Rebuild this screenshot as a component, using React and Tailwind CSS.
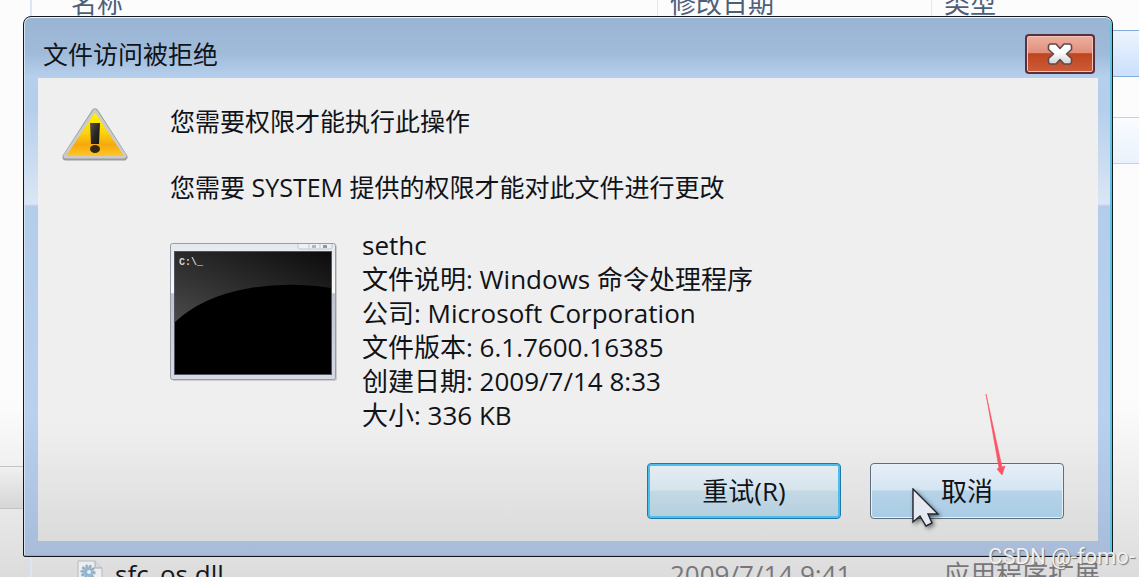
import clsx from 'clsx';

const details = [
  'sethc',
  '文件说明: Windows 命令处理程序',
  '公司: Microsoft Corporation',
  '文件版本: 6.1.7600.16385',
  '创建日期: 2009/7/14 8:33',
  '大小: 336 KB',
];

function FileList() {
  return (
    <div className="absolute inset-0 flex overflow-hidden bg-linear-to-b from-[#fcfcfd] from-70% to-[#dcdcdc]">
      <aside className="flex w-8 shrink-0 flex-col justify-end border-r-2 border-[#d9e6f3]">
        <div className="mb-[68px] h-[43px] border-y border-[#c4c4c4] bg-linear-to-b from-[#f0f0f0] to-[#d6d6d6]" />
      </aside>
      <div className="min-w-0 flex-1">
        <table className="-mt-6 w-full table-fixed border-separate border-spacing-0 text-left text-[26px] text-[#4c607a]">
          <colgroup>
            <col />
            <col className="w-[274px]" />
            <col className="w-[208px]" />
          </colgroup>
          <thead>
            <tr className="h-[54px]">
              <th className="pl-[39px] font-normal">名称</th>
              <th className="border-l border-[#dfe8f3] pl-3 font-normal">修改日期</th>
              <th className="border-l border-[#dfe8f3] pl-3 font-normal">类型</th>
            </tr>
          </thead>
          <tbody>
            <tr className="h-[47px]">
              <td colSpan={3} className="border-y border-[#84acdd] bg-linear-to-b from-[#edf4fe] to-[#c9e0fc]" />
            </tr>
            <tr className="h-10">
              <td colSpan={3} />
            </tr>
            <tr className="h-[47px]">
              <td colSpan={3} className="border-y border-[#b9d4ee] bg-linear-to-b from-[#fafcff] to-[#e9f2fc]" />
            </tr>
            <tr className="h-[386px]">
              <td colSpan={3} />
            </tr>
            <tr className="h-12 text-[#77777b]">
              <td className="pl-[45px]">
                <div className="flex items-center gap-3 text-[#16181c]">
                  <DllIcon />
                  sfc_os.dll
                </div>
              </td>
              <td className="pl-[13px]">2009/7/14 9:41</td>
              <td className="pl-[13px]">应用程序扩展</td>
            </tr>
          </tbody>
        </table>
      </div>
    </div>
  );
}

function DllIcon() {
  return (
    <svg width="26" height="28" viewBox="0 0 26 28" aria-hidden="true">
      <path d="M1 1H18L25 8V27H1Z" fill="#eceef0" stroke="#b5b9be" />
      <path d="M18 1V8H25" fill="#d6d9dd" stroke="#a9adb3" />
      <circle cx="11" cy="12" r="6" fill="#a9c3d8" stroke="#93a9bb" strokeWidth="3" strokeDasharray="2 1.6" />
      <circle cx="11" cy="12" r="4" fill="#8fb4d0" />
      <circle cx="12" cy="12" r="2" fill="#e6eff6" />
    </svg>
  );
}

function WarningIcon() {
  return (
    <svg width="68" height="56" viewBox="0 0 68 56" className="shrink-0" aria-hidden="true">
      <defs>
        <linearGradient id="warnFill" x1="0" y1="0" x2="0" y2="1">
          <stop offset="0" stopColor="#fff200" />
          <stop offset="0.45" stopColor="#fcd40c" />
          <stop offset="0.75" stopColor="#f6a80c" />
          <stop offset="1" stopColor="#fdc524" />
        </linearGradient>
        <linearGradient id="warnMark" x1="0" y1="0" x2="1" y2="1">
          <stop offset="0" stopColor="#5b5648" />
          <stop offset="0.5" stopColor="#2b2925" />
          <stop offset="1" stopColor="#15140f" />
        </linearGradient>
      </defs>
      <path d="M33 5L62 50H4Z" fill="#9b9b9b" stroke="#9b9b9b" strokeWidth="7" strokeLinejoin="round" />
      <path d="M33 5L62 49H4Z" fill="#cbcbcb" stroke="#cbcbcb" strokeWidth="5" strokeLinejoin="round" />
      <path d="M33 7L60 48H6Z" fill="url(#warnFill)" stroke="url(#warnFill)" strokeWidth="2" strokeLinejoin="round" />
      <path d="M28 16H38L37 37H29Z" fill="url(#warnMark)" />
      <ellipse cx="33" cy="42" rx="5" ry="4" fill="#33280f" />
    </svg>
  );
}

function ConsoleIcon() {
  return (
    <svg width="168" height="140" viewBox="0 0 168 140" className="shrink-0" aria-hidden="true">
      <defs>
        <linearGradient id="shine" x1="0" y1="1" x2="1" y2="0">
          <stop offset="0" stopColor="#4a4a4a" />
          <stop offset="0.5" stopColor="#2a2a2a" />
          <stop offset="1" stopColor="#0c0c0c" />
        </linearGradient>
        <linearGradient id="frame" x1="0" y1="0" x2="0" y2="1">
          <stop offset="0" stopColor="#e4e8ee" />
          <stop offset="0.36" stopColor="#fafbfc" />
          <stop offset="0.37" stopColor="#bfc5cf" />
          <stop offset="1" stopColor="#d5dae4" />
        </linearGradient>
      </defs>
      <rect x="2" y="2" width="165" height="136" rx="2" fill="#cccccc" />
      <rect x="0.5" y="0.5" width="165" height="136" rx="2" fill="url(#frame)" stroke="#989da5" />
      <path d="M128 1V4Q128 6 130 6H160Q162 6 162 4V1" fill="#eef0f3" stroke="#c3c7ce" />
      <path d="M139 1V6M150 1V6" stroke="#c3c7ce" />
      <rect x="142" y="2" width="4" height="3" fill="#b3b8c0" />
      <rect x="153" y="2" width="4" height="3" fill="#9097a1" />
      <rect x="4.5" y="8.5" width="157" height="123" fill="#000" stroke="#50545c" />
      <path d="M5 9H161V45Q115 38 75 46Q32 54 5 79Z" fill="url(#shine)" />
      <text x="9" y="22" fill="#d6d6d6" className="font-['Liberation_Mono',monospace] text-[10px] font-bold">
        C:\_
      </text>
    </svg>
  );
}

function CloseIcon() {
  return (
    <svg width="26" height="22" viewBox="0 0 26 22" aria-hidden="true">
      <defs>
        <linearGradient id="cross" x1="0" y1="0" x2="0" y2="1">
          <stop offset="0.4" stopColor="#ffffff" />
          <stop offset="1" stopColor="#d2d2d2" />
        </linearGradient>
      </defs>
      <path
        d="M3 1H9L13 5.5L17 1H23L24.500 2.500V6.500L19.500 11L24.500 15.500V19.500L23 21H17L13 16.500L9 21H3L1.500 19.500V15.500L6.500 11L1.500 6.500V2.500Z"
        fill="url(#cross)"
        stroke="#5d4a50"
        strokeWidth="1.6"
        strokeLinejoin="round"
      />
    </svg>
  );
}

function DialogButton({ primary, children }) {
  return (
    <button
      type="button"
      className={clsx(
        'relative flex h-14 w-[194px] items-center justify-center rounded-sm border text-[26px]',
        primary
          ? 'border-[#2476a6] bg-[linear-gradient(#e6edf3,#d6e4ec_48%,#c4d9e5_50%,#b4cede)] shadow-[inset_0_0_0_2px_#48bfec]'
          : 'border-[#5d6f7e] bg-[linear-gradient(#e8eef8,#d4e5f2_48%,#b6d3e7_50%,#a9cce5)] shadow-[inset_0_0_0_1px_#e6f1f8]'
      )}
    >
      {children}
    </button>
  );
}

function Pointer() {
  return (
    <svg width="32" height="44" viewBox="0 0 32 44" className="absolute top-6 left-[41px] drop-shadow-[2px_2px_2px_#00000080]" aria-hidden="true">
      <path d="M1 1V34L8 28L14 38L20 35L16 26H26Z" fill="#e6e9ef" stroke="#20242c" strokeWidth="1.4" />
    </svg>
  );
}

function RedArrow() {
  return (
    <svg width="22" height="84" viewBox="0 0 22 84" className="absolute right-[58px] bottom-[43px]" aria-hidden="true">
      <path d="M2 2L18 75L21 74L18 83L13 77L15 76Z" fill="#fb5362" stroke="#fb5362" strokeWidth="0.6" />
    </svg>
  );
}

function AccessDialog() {
  return (
    <div
      role="dialog"
      aria-labelledby="dialog-title"
      className="relative mr-[26px] ml-[23px] rounded-t-lg rounded-b-xs border border-[#15181d] bg-[linear-gradient(#9ab5d3,#a0bbda_36px,#b5cfec_60px,#b5ceea_90px,#dae6f5_187px,#b4cdea_189px,#b9d1ed_400px,#a8bcd9)] px-[14px] pb-[15px] shadow-[inset_0_1px_0_#eef5fb,inset_-2px_-1px_0_#5cc3e3,inset_1px_0_0_#d5e3f1]"
    >
      <div className="flex h-[61px] items-center justify-between pt-3 pr-[3px] pl-[5px]">
        <h1 id="dialog-title">文件访问被拒绝</h1>
        <button
          type="button"
          aria-label="关闭"
          className="flex h-10 w-[70px] items-center justify-center rounded-sm border-2 border-[#5c2f3d] bg-[linear-gradient(#eeb0a0,#e18f7b_47%,#c0451f_49%,#cd5c38)] shadow-[inset_0_0_0_1px_#f1c4b7]"
        >
          <CloseIcon />
        </button>
      </div>
      <div className="bg-linear-to-b from-[#efefef] from-75% to-[#dbdbdb] pt-[26px] pr-[34px] pb-[22px] pl-6">
        <div className="flex gap-10">
          <div className="pt-[3px]">
            <WarningIcon />
          </div>
          <div className="min-w-0 flex-1">
            <p>您需要权限才能执行此操作</p>
            <p className="mt-8">您需要 SYSTEM 提供的权限才能对此文件进行更改</p>
            <div className="mt-6 flex gap-6">
              <div className="pt-[15px]">
                <ConsoleIcon />
              </div>
              <ul className="text-[26px]">
                {details.map((line) => (
                  <li key={line}>{line}</li>
                ))}
              </ul>
            </div>
          </div>
        </div>
        <div className="relative mt-[31px] flex justify-end gap-[29px]">
          <DialogButton primary>重试(R)</DialogButton>
          <DialogButton>
            取消
            <Pointer />
          </DialogButton>
          <RedArrow />
        </div>
      </div>
    </div>
  );
}

export default function App() {
  return (
    <div className="relative h-screen overflow-hidden pt-4 font-['Open_Sans','Noto_Sans_CJK_SC',sans-serif] text-[25px] leading-[34px] text-[#101318]">
      <FileList />
      <AccessDialog />
      <p className="absolute right-1 bottom-1 font-['Roboto',sans-serif] text-[22px] leading-8 text-[#f0f0f0] [text-shadow:1px_1px_1px_#777]">
        CSDN @-fomo-
      </p>
    </div>
  );
}
